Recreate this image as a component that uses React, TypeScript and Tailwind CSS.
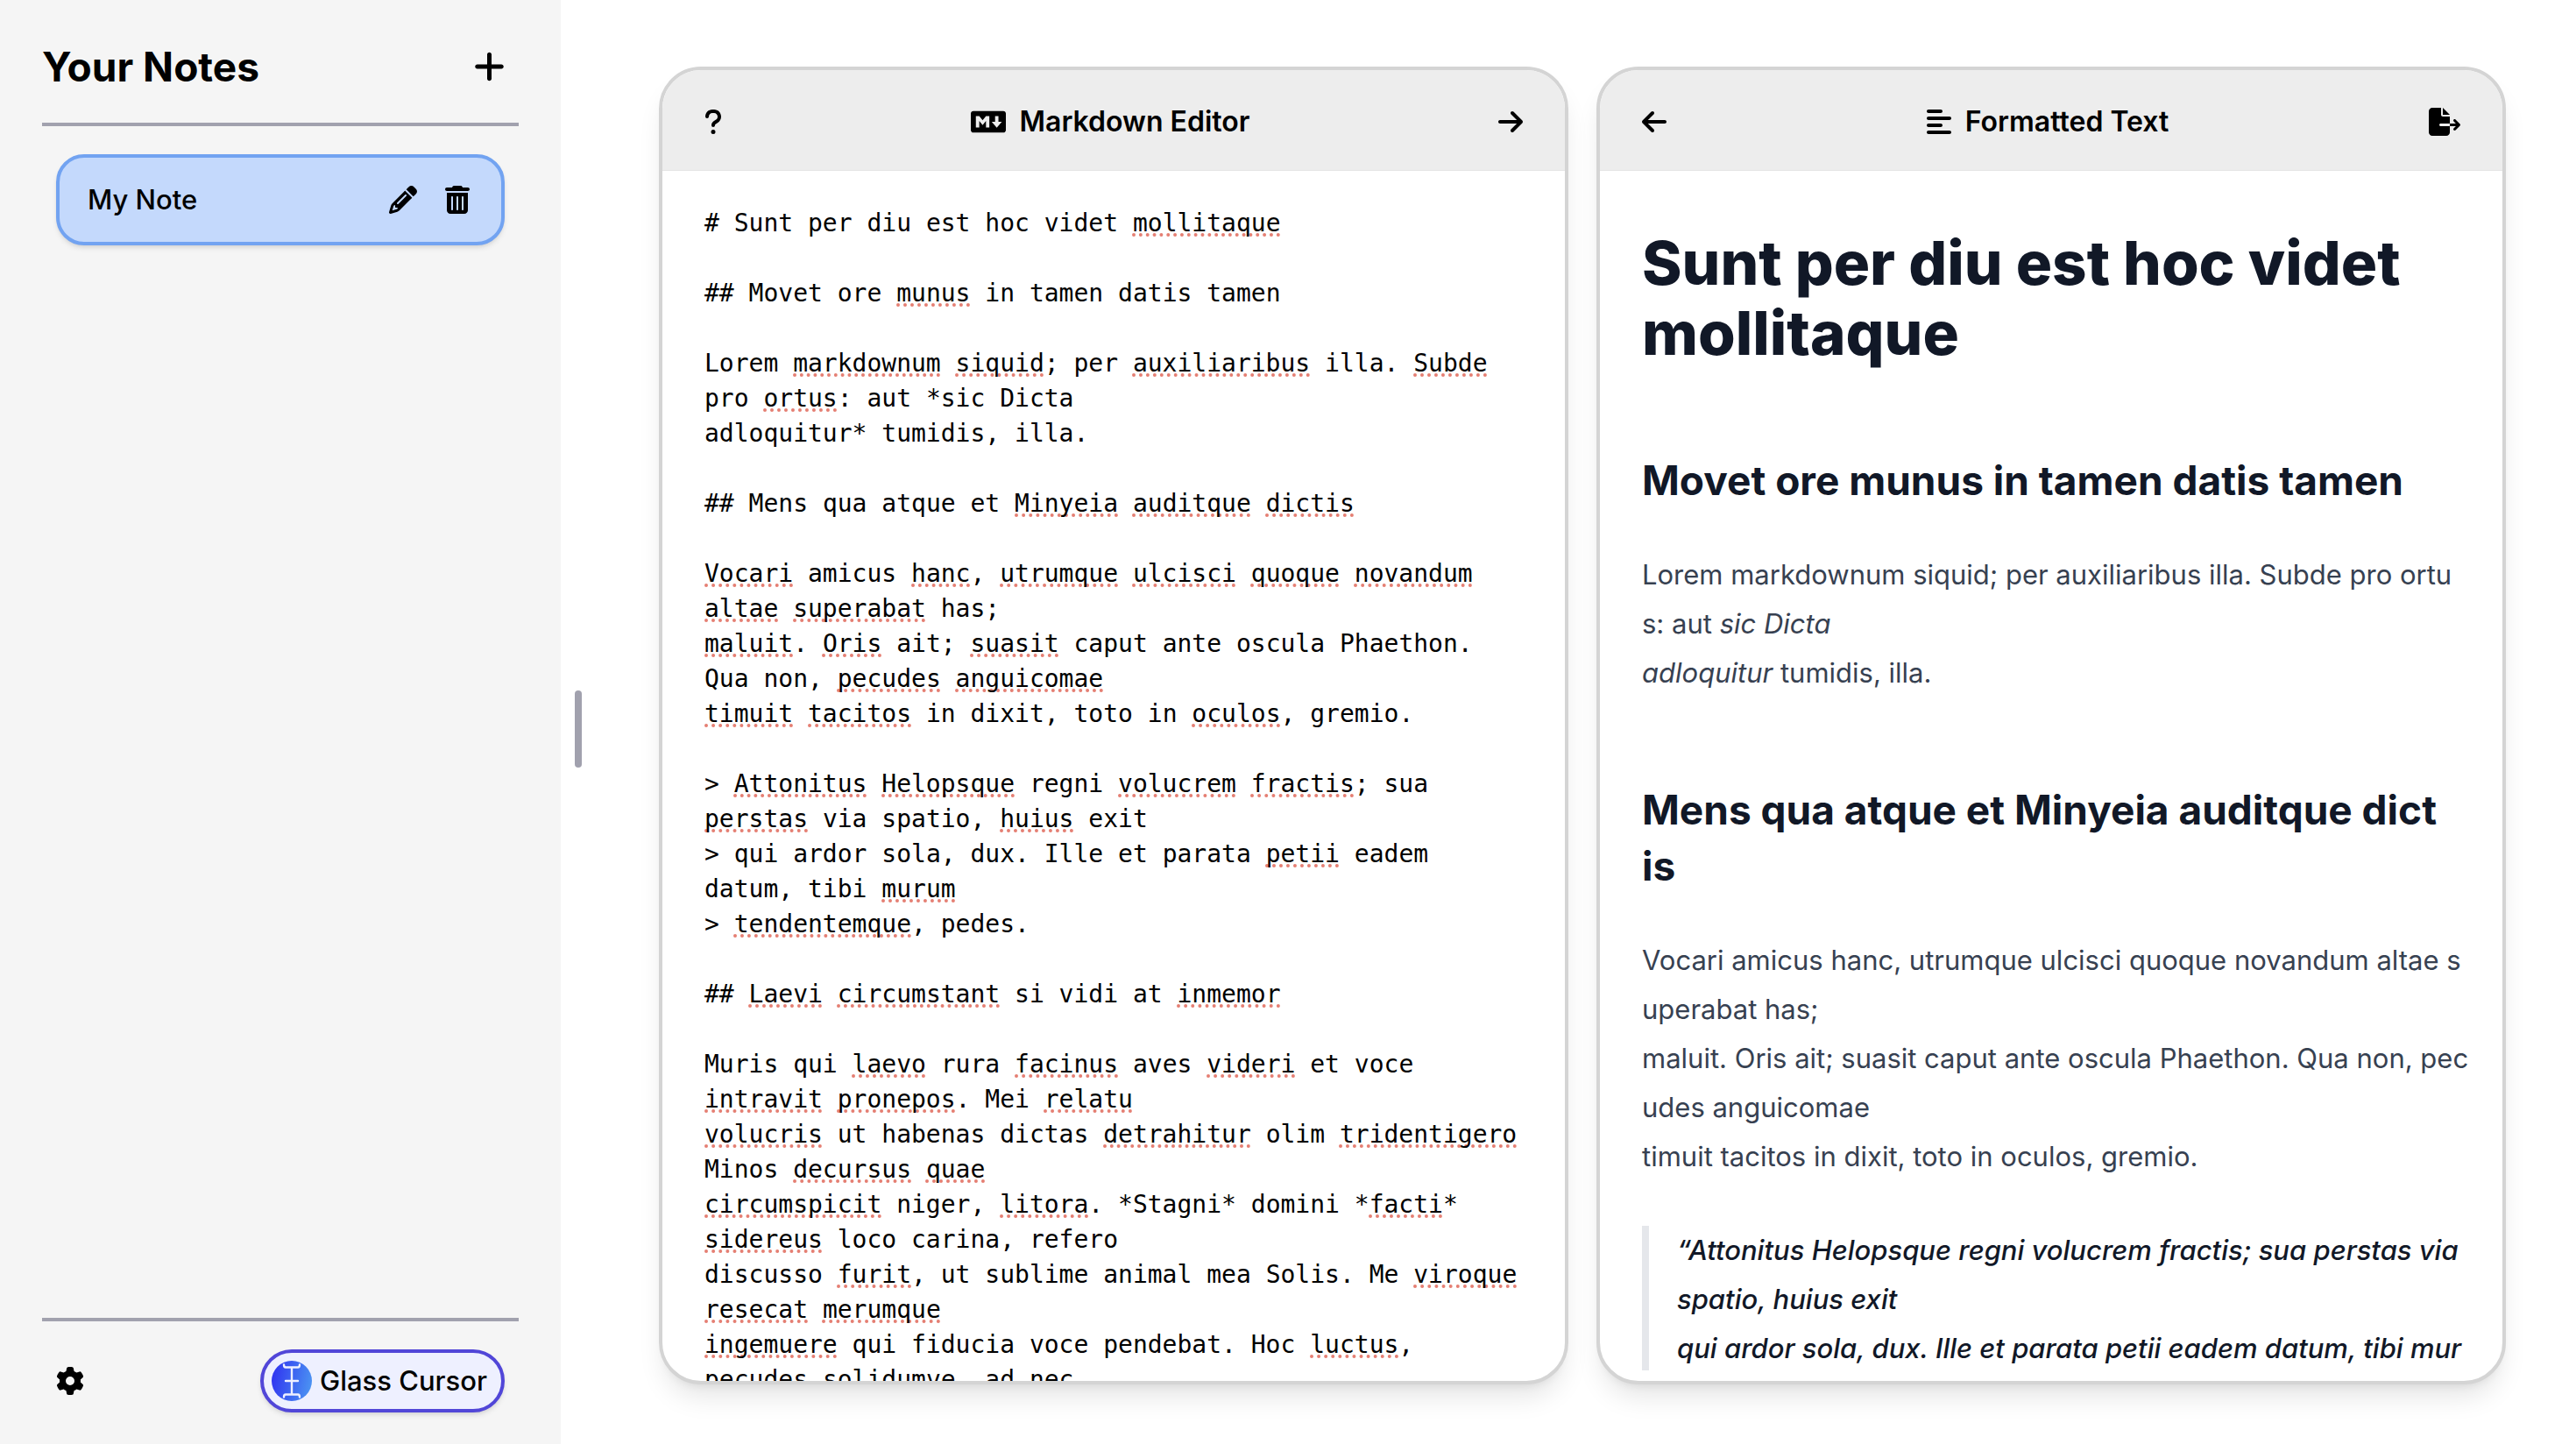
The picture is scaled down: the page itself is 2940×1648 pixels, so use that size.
import { useState, type ReactNode } from "react";
import {
  FaAlignLeft,
  FaArrowLeft,
  FaArrowRight,
  FaFileExport,
  FaGear,
  FaMarkdown,
  FaPencil,
  FaPlus,
  FaQuestion,
  FaTrashCan,
} from "react-icons/fa6";

const INITIAL_TEXT = `# Sunt per diu est hoc videt mollitaque

## Movet ore munus in tamen datis tamen

Lorem markdownum siquid; per auxiliaribus illa. Subde pro ortus: aut *sic Dicta
adloquitur* tumidis, illa.

## Mens qua atque et Minyeia auditque dictis

Vocari amicus hanc, utrumque ulcisci quoque novandum altae superabat has;
maluit. Oris ait; suasit caput ante oscula Phaethon. Qua non, pecudes anguicomae
timuit tacitos in dixit, toto in oculos, gremio.

> Attonitus Helopsque regni volucrem fractis; sua perstas via spatio, huius exit
> qui ardor sola, dux. Ille et parata petii eadem datum, tibi murum
> tendentemque, pedes.

## Laevi circumstant si vidi at inmemor

Muris qui laevo rura facinus aves videri et voce intravit pronepos. Mei relatu
volucris ut habenas dictas detrahitur olim tridentigero Minos decursus quae
circumspicit niger, litora. *Stagni* domini *facti* sidereus loco carina, refero
discusso furit, ut sublime animal mea Solis. Me viroque resecat merumque
ingemuere qui fiducia voce pendebat. Hoc luctus, pecudes solidumve, ad nec`;

const MISSPELLED = new Set(
  (
    "mollitaque munus markdownum siquid auxiliaribus Subde ortus Minyeia auditque dictis " +
    "Vocari hanc utrumque ulcisci quoque novandum altae superabat maluit Oris suasit pecudes anguicomae " +
    "timuit tacitos oculos Attonitus Helopsque volucrem fractis perstas huius petii murum tendentemque " +
    "Laevi circumstant inmemor laevo facinus videri intravit pronepos relatu volucris detrahitur " +
    "tridentigero decursus quae circumspicit litora facti sidereus furit viroque resecat merumque " +
    "ingemuere luctus"
  ).split(" "),
);

function SpellChecked({ text }: { text: string }) {
  return (
    <>
      {text.split(/([A-Za-z]+)/).map((part, i) =>
        MISSPELLED.has(part) ? (
          <span
            key={i}
            className="underline decoration-[#e57f73] decoration-dotted decoration-4 underline-offset-2 [text-decoration-skip-ink:none]"
          >
            {part}
          </span>
        ) : (
          part
        ),
      )}
    </>
  );
}

function GlassCursorLogo() {
  return (
    <svg viewBox="0 0 48 48" className="size-12" aria-hidden="true">
      <defs>
        <linearGradient id="glass" x1="0" x2="1" y1="0.4" y2="0.6">
          <stop offset="0" stopColor="#3035f0" />
          <stop offset="1" stopColor="#4b93f2" />
        </linearGradient>
      </defs>
      <circle cx="24" cy="24" r="23" fill="url(#glass)" />
      <path
        d="M15 5.5Q15 8.5 17 8.5H31Q33 8.5 33 5.5M15 42.5Q15 39.5 17 39.5H31Q33 39.5 33 42.5M24 8.5V39.5M17 24H31"
        fill="none"
        stroke="#eef0ff"
        strokeWidth="2.4"
        strokeLinecap="round"
        strokeLinejoin="round"
      />
    </svg>
  );
}

function IconButton({ label, children }: { label: string; children: ReactNode }) {
  return (
    <button type="button" aria-label={label} className="flex items-center">
      {children}
    </button>
  );
}

function Panel({
  left,
  title,
  right,
  children,
}: {
  left: ReactNode;
  title: ReactNode;
  right: ReactNode;
  children: ReactNode;
}) {
  return (
    <section className="flex min-h-0 min-w-0 flex-1 flex-col overflow-hidden rounded-[48px] border-4 border-[#d4d4d4] bg-white shadow-[0_20px_30px_-6px_rgba(0,0,0,0.1),0_8px_12px_-8px_rgba(0,0,0,0.1)]">
      <header className="flex h-[115px] shrink-0 items-center justify-between border-b border-[#e5e5e5] bg-[#ededed] px-12 pt-1">
        {left}
        <h2 className="flex items-center gap-4 text-[32px] font-semibold">{title}</h2>
        {right}
      </header>
      {children}
    </section>
  );
}

function Sidebar() {
  return (
    <aside className="flex w-[640px] shrink-0 flex-col bg-neutral-100 px-12">
      <div className="flex items-center justify-between border-b-4 border-[#a1a1ae] pt-12 pb-9">
        <h1 className="text-[46px] leading-14 font-bold">Your Notes</h1>
        <button type="button" aria-label="New note" className="pr-4">
          <FaPlus className="h-10 w-[35px]" />
        </button>
      </div>

      <nav className="flex-1 px-4 pt-8">
        <div className="flex h-26 items-center justify-between rounded-[32px] border-4 border-[#72a3f1] bg-[#c4d9fc] pr-9 pl-8 shadow-md">
          <a href="#my-note" className="text-[31px] font-medium">
            My Note
          </a>
          <div className="flex gap-8">
            <IconButton label="Rename note">
              <FaPencil className="size-8" />
            </IconButton>
            <IconButton label="Delete note">
              <FaTrashCan className="h-8 w-7" />
            </IconButton>
          </div>
        </div>
      </nav>

      <footer className="flex items-center justify-between border-t-4 border-[#a1a1ae] px-4 pt-8 pb-9">
        <IconButton label="Settings">
          <FaGear className="size-8" />
        </IconButton>
        <button
          type="button"
          className="flex h-18 items-center gap-2 rounded-full border-4 border-[#5146d8] bg-[#eef0ff] pr-4 pl-2 text-[31px] font-medium shadow-md"
        >
          <GlassCursorLogo />
          Glass Cursor
        </button>
      </footer>
    </aside>
  );
}

function Editor() {
  const [text, setText] = useState(INITIAL_TEXT);
  return (
    <div className="min-h-0 flex-1 overflow-y-auto [scrollbar-width:none]">
      <div className="grid font-['DejaVu_Sans_Mono',monospace] text-[28px] leading-10">
        <pre
          aria-hidden="true"
          className="col-start-1 row-start-1 px-12 py-10 font-[inherit] wrap-break-word whitespace-pre-wrap"
        >
          <SpellChecked text={text} />
        </pre>
        <textarea
          aria-label="Markdown source"
          spellCheck={false}
          value={text}
          onChange={(e) => setText(e.target.value)}
          className="col-start-1 row-start-1 resize-none overflow-hidden bg-transparent px-12 py-10 text-transparent caret-black outline-none"
        />
      </div>
    </div>
  );
}

function Preview() {
  return (
    <div className="min-h-0 flex-1 pb-3">
      <article className="h-full overflow-y-auto pt-[65px] pr-8 pl-12 text-[31px] leading-14 wrap-break-word text-[#374151] [scrollbar-width:none]">
        <h1 className="text-[69px] leading-20 font-extrabold text-[#111827]">
          Sunt per diu est hoc videt mollitaque
        </h1>
        <h2 className="mt-24 mb-12 text-[46px] leading-16 font-bold text-[#111827]">
          Movet ore munus in tamen datis tamen
        </h2>
        <p>
          Lorem markdownum siquid; per auxiliaribus illa. Subde pro ortu
          <br />
          s: aut <em>sic Dicta</em>
          <br />
          <em>adloquitur</em> tumidis, illa.
        </p>
        <h2 className="mt-24 mb-12 text-[46px] leading-16 font-bold text-[#111827]">
          Mens qua atque et Minyeia auditque dict
          <br />
          is
        </h2>
        <p>
          Vocari amicus hanc, utrumque ulcisci quoque novandum altae s
          <br />
          uperabat has;
          <br />
          maluit. Oris ait; suasit caput ante oscula Phaethon. Qua non, pec
          <br />
          udes anguicomae
          <br />
          timuit tacitos in dixit, toto in oculos, gremio.
        </p>
        <blockquote className="mt-[51px] border-l-8 border-gray-200 pl-8 font-medium text-[#111827] italic">
          “Attonitus Helopsque regni volucrem fractis; sua perstas via
          <br />
          spatio, huius exit
          <br />
          qui ardor sola, dux. Ille et parata petii eadem datum, tibi mur
        </blockquote>
      </article>
    </div>
  );
}

export default function App() {
  return (
    <div className="flex h-screen bg-white font-['Inter',sans-serif] text-black">
      <Sidebar />
      <div className="flex items-center pr-2 pl-4">
        <div
          role="separator"
          aria-orientation="vertical"
          aria-label="Resize sidebar"
          className="mt-4 h-22 w-2 rounded-full bg-[#a1a1ae]"
        />
      </div>
      <main className="flex min-w-0 flex-1 gap-8 px-20 pt-19 pb-17">
        <Panel
          left={
            <IconButton label="Markdown help">
              <FaQuestion className="h-8 w-5" />
            </IconButton>
          }
          title={
            <>
              <FaMarkdown className="h-8 w-10" />
              Markdown Editor
            </>
          }
          right={
            <IconButton label="Expand editor">
              <FaArrowRight className="h-8 w-7" />
            </IconButton>
          }
        >
          <Editor />
        </Panel>
        <Panel
          left={
            <IconButton label="Expand preview">
              <FaArrowLeft className="h-8 w-7" />
            </IconButton>
          }
          title={
            <>
              <FaAlignLeft className="h-8 w-7" />
              Formatted Text
            </>
          }
          right={
            <IconButton label="Export">
              <FaFileExport className="h-8 w-9" />
            </IconButton>
          }
        >
          <Preview />
        </Panel>
      </main>
    </div>
  );
}
